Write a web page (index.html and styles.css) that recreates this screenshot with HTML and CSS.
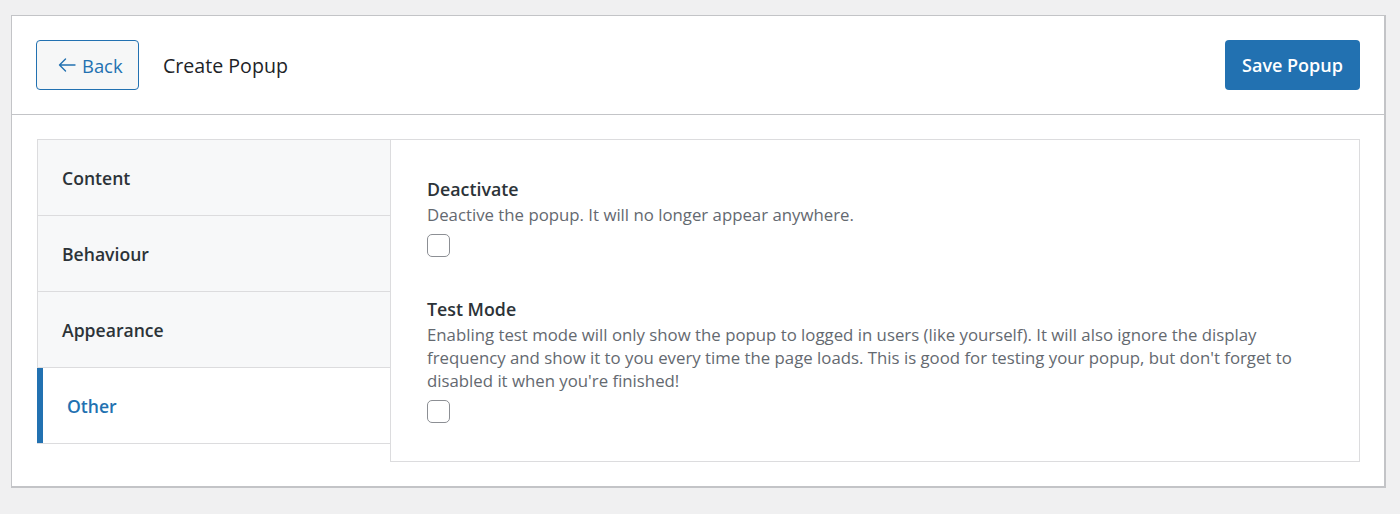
FILE: index.html
```html
<!DOCTYPE html>
<html lang="en">
<head>
<meta charset="utf-8">
<title>Create Popup</title>
<link rel="stylesheet" href="styles.css">
</head>
<body>
<div class="card">
  <header class="topbar">
    <div class="topbar-left">
      <button class="btn-back" type="button">
        <svg class="arrow" width="18" height="14" viewBox="0 0 18 14" aria-hidden="true">
          <path d="M17 7H1.5M7.5 1L1.5 7l6 6" fill="none" stroke="currentColor" stroke-width="1.4" stroke-linecap="round" stroke-linejoin="round"/>
        </svg>
        <span>Back</span>
      </button>
      <h1 class="title">Create Popup</h1>
    </div>
    <button class="btn-save" type="button">Save Popup</button>
  </header>
  <div class="body">
    <nav class="tabs">
      <div class="tab">Content</div>
      <div class="tab">Behaviour</div>
      <div class="tab">Appearance</div>
      <div class="tab active">Other</div>
    </nav>
    <section class="panel">
      <div class="field">
        <div class="field-label">Deactivate</div>
        <div class="field-desc">Deactive the popup. It will no longer appear anywhere.</div>
        <span class="checkbox"></span>
      </div>
      <div class="field">
        <div class="field-label">Test Mode</div>
        <div class="field-desc">Enabling test mode will only show the popup to logged in users (like yourself). It will also ignore the display frequency and show it to you every time the page loads. This is good for testing your popup, but don't forget to disabled it when you're finished!</div>
        <span class="checkbox"></span>
      </div>
    </section>
  </div>
</div>
</body>
</html>
```

FILE: styles.css
```css
* { box-sizing: border-box; }
html, body { margin: 0; padding: 0; }
body {
  background: #f0f0f1;
  font-family: "Open Sans", "Noto Sans", "Liberation Sans", sans-serif;
  color: #1d2327;
  padding: 15px 14px 0 11px;
}
.card {
  background: #fff;
  border: 1px solid #c3c4c7;
  border-right-width: 2px;
  border-bottom-width: 2px;
}
.topbar {
  display: flex;
  align-items: center;
  justify-content: space-between;
  padding: 24px;
  border-bottom: 1px solid #c3c4c7;
}
.topbar-left {
  display: flex;
  align-items: center;
  gap: 24px;
}
.btn-back {
  display: flex;
  align-items: center;
  gap: 6px;
  height: 50px;
  width: 103px;
  padding: 0 0 0 21px;
  border: 1px solid #2271b1;
  border-radius: 4px;
  background: #f6f7f7;
  color: #2271b1;
  font: 500 18.4px "Open Sans", "Noto Sans", sans-serif;
  cursor: pointer;
}
.arrow { display: block; }
.title {
  margin: 0;
  font-size: 19.6px;
  font-weight: 500;
  color: #1d2327;
}
.btn-save {
  height: 50px;
  width: 135px;
  padding: 0;
  border: 0;
  border-radius: 4px;
  background: #2271b1;
  color: #fff;
  font: 600 18px "Open Sans", "Noto Sans", sans-serif;
  cursor: pointer;
}
.body {
  display: grid;
  grid-template-columns: 353px 1fr;
  align-items: start;
  padding: 24px 24px 24px 25px;
}
.tabs {
  border: 1px solid #dcdcde;
  border-right: 0;
}
.tab {
  height: 76px;
  display: flex;
  align-items: center;
  padding-left: 24px;
  background: #f7f8f9;
  border-bottom: 1px solid #dcdcde;
  font-size: 17.6px;
  font-weight: 600;
  color: #2c3338;
}
.tab:last-child { border-bottom: 0; height: 75px; }
.tab.active {
  background: #fff;
  color: #2271b1;
  border-left: 6px solid #2271b1;
  margin-left: -1px;
  padding-left: 24px;
}
.panel {
  border: 1px solid #dcdcde;
  padding: 37px 36px 38px;
  display: flex;
  flex-direction: column;
  gap: 40px;
}
.field-label {
  font-size: 17.8px;
  font-weight: 600;
  color: #2c3338;
  line-height: 25px;
}
.field-desc {
  font-size: 16.8px;
  line-height: 23px;
  color: #646970;
  margin-bottom: 8px;
}
.field-label + .field-desc { margin-top: 1px; }
.checkbox {
  display: block;
  width: 23px;
  height: 23px;
  border: 1px solid #8c8f94;
  border-radius: 5px;
  background: #fff;
}
```
